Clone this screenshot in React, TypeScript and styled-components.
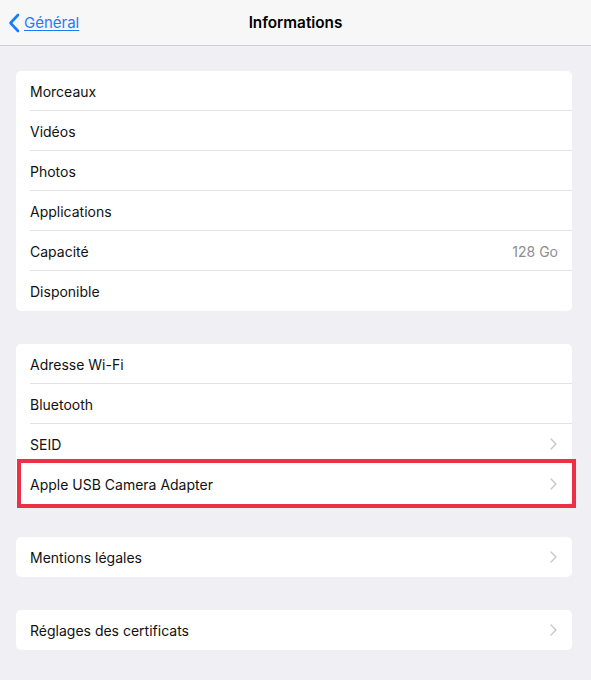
import React from "react";
import styled, { createGlobalStyle } from "styled-components";

const Global = createGlobalStyle`
  html, body { margin: 0; padding: 0; background: #efeff4; }
  body { font-family: Inter, "Noto Sans", "Liberation Sans", sans-serif; -webkit-font-smoothing: antialiased; }
`;

const Page = styled.div`
  width: 591px;
  height: 680px;
  background: #efeff4;
  overflow: hidden;
`;

const NavBar = styled.header`
  height: 45px;
  background: #f7f7f8;
  border-bottom: 1px solid #cfcfd4;
  display: grid;
  grid-template-columns: 1fr auto 1fr;
  align-items: center;
  padding: 0 8px;
`;

const BackLink = styled.a`
  display: flex;
  align-items: center;
  gap: 3px;
  color: #157efb;
  font-size: 15px;
  text-decoration: underline;
  text-underline-offset: 2px;
  text-decoration-thickness: 1px;
  cursor: pointer;
`;

const Title = styled.h1`
  margin: 0;
  font-size: 15.3px;
  font-weight: 600;
  color: #000;
`;

const Content = styled.main`
  display: flex;
  flex-direction: column;
  gap: 33px;
  padding: 25px 19px 0 16px;
`;

const Card = styled.section`
  background: #fff;
  border-radius: 5px;
  display: flex;
  flex-direction: column;
`;

const Row = styled.div<{ $last?: boolean }>`
  position: relative;
  height: 40px;
  box-sizing: border-box;
  padding-left: 14px;
  display: flex;
  align-items: center;
  ${(p) =>
    p.$last
      ? ""
      : `&::after {
    content: "";
    position: absolute;
    left: 14px;
    right: 0;
    bottom: 0;
    height: 1px;
    background: #e3e3e6;
  }`}
`;

const Label = styled.span`
  flex: 1;
  font-size: 14px;
  color: #111;
`;

const Value = styled.span`
  font-size: 14px;
  color: #8e8e93;
  padding-right: 14px;
`;

const Chevron = styled.svg`
  width: 7px;
  height: 12px;
  margin-right: 15px;
`;

const Highlight = styled.div`
  position: absolute;
  top: -5px;
  bottom: -4px;
  left: 1px;
  right: -4px;
  border: 4px solid #ec3047;
  pointer-events: none;
`;

type Item = { label: string; value?: string; chevron?: boolean; highlight?: boolean };

const groups: Item[][] = [
  [
    { label: "Morceaux" },
    { label: "Vidéos" },
    { label: "Photos" },
    { label: "Applications" },
    { label: "Capacité", value: "128 Go" },
    { label: "Disponible" },
  ],
  [
    { label: "Adresse Wi-Fi" },
    { label: "Bluetooth" },
    { label: "SEID", chevron: true },
    { label: "Apple USB Camera Adapter", chevron: true, highlight: true },
  ],
  [{ label: "Mentions légales", chevron: true }],
  [{ label: "Réglages des certificats", chevron: true }],
];

const ChevronIcon = () => (
  <Chevron viewBox="0 0 7 12">
    <path d="M1 1l5 5-5 5" fill="none" stroke="#c4c4c9" strokeWidth="1.3" strokeLinecap="round" strokeLinejoin="round" />
  </Chevron>
);

export default function App() {
  return (
    <Page>
      <Global />
      <NavBar>
        <BackLink>
          <svg width="13" height="20" viewBox="0 0 13 20">
            <path d="M10 2L2.5 10l7.5 8" fill="none" stroke="#157efb" strokeWidth="2.6" strokeLinecap="round" strokeLinejoin="round" />
          </svg>
          Général
        </BackLink>
        <Title>Informations</Title>
        <span />
      </NavBar>
      <Content>
        {groups.map((g, gi) => (
          <Card key={gi}>
            {g.map((it, i) => (
              <Row key={it.label} $last={i === g.length - 1 || it.highlight || g[i + 1]?.highlight}>
                <Label>{it.label}</Label>
                {it.value && <Value>{it.value}</Value>}
                {it.chevron && <ChevronIcon />}
                {it.highlight && <Highlight />}
              </Row>
            ))}
          </Card>
        ))}
      </Content>
    </Page>
  );
}
